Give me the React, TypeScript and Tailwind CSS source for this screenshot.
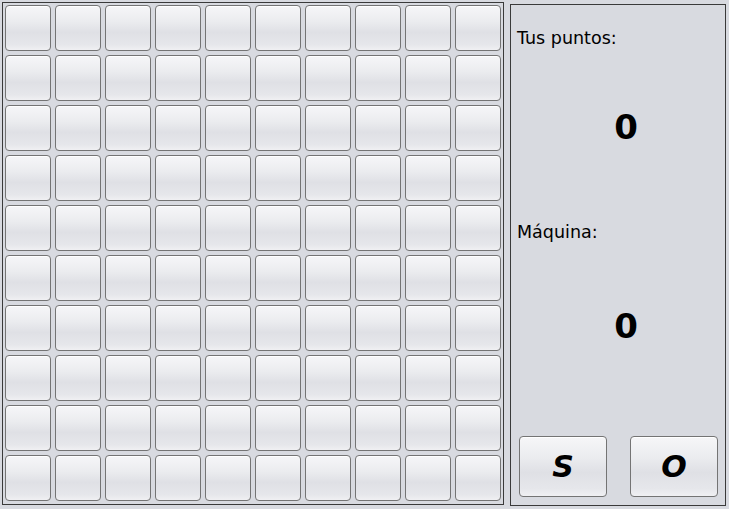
const cells = Array.from({ length: 100 }, (_, i) => i);

const btn =
  "rounded-[4px] border border-[#747474] bg-[linear-gradient(180deg,#f6f6f8_0%,#ebecef_35%,#dfe0e5_60%,#e6e7eb_88%,#f0f0f3_100%)] shadow-[inset_0_1px_0_#ffffff]";

export default function App() {
  return (
    <div
      className="w-[729px] h-[509px] bg-[#d8dae0] flex text-black"
      style={{ fontFamily: '"DejaVu Sans", sans-serif' }}
    >
      <div className="ml-[2px] mt-[2px] w-[502px] h-[503px] border border-[#3a3a3a] p-[2px]">
        <div className="grid grid-cols-10 gap-[4px]">
          {cells.map((i) => (
            <button key={i} className={`${btn} w-[46px] h-[46px]`} />
          ))}
        </div>
      </div>
      <div className="ml-[6px] mt-[4px] w-[216px] h-[502px] border border-[#3a3a3a] flex flex-col px-[6px]">
        <div className="text-[17.5px] leading-none mt-[25px]">Tus puntos:</div>
        <div className="text-[34px] font-bold leading-none text-center mt-[62px] pl-[16px]">0</div>
        <div className="text-[17.5px] leading-none mt-[80px]">Máquina:</div>
        <div className="text-[34px] font-bold leading-none text-center mt-[68px] pl-[16px]">0</div>
        <div className="flex justify-between mt-auto mb-[8px] pl-[2px] pr-[1px]">
          <button className={`${btn} w-[88px] h-[61px] text-[30px] font-bold italic`}>S</button>
          <button className={`${btn} w-[88px] h-[61px] text-[30px] font-bold italic`}>O</button>
        </div>
      </div>
    </div>
  );
}
